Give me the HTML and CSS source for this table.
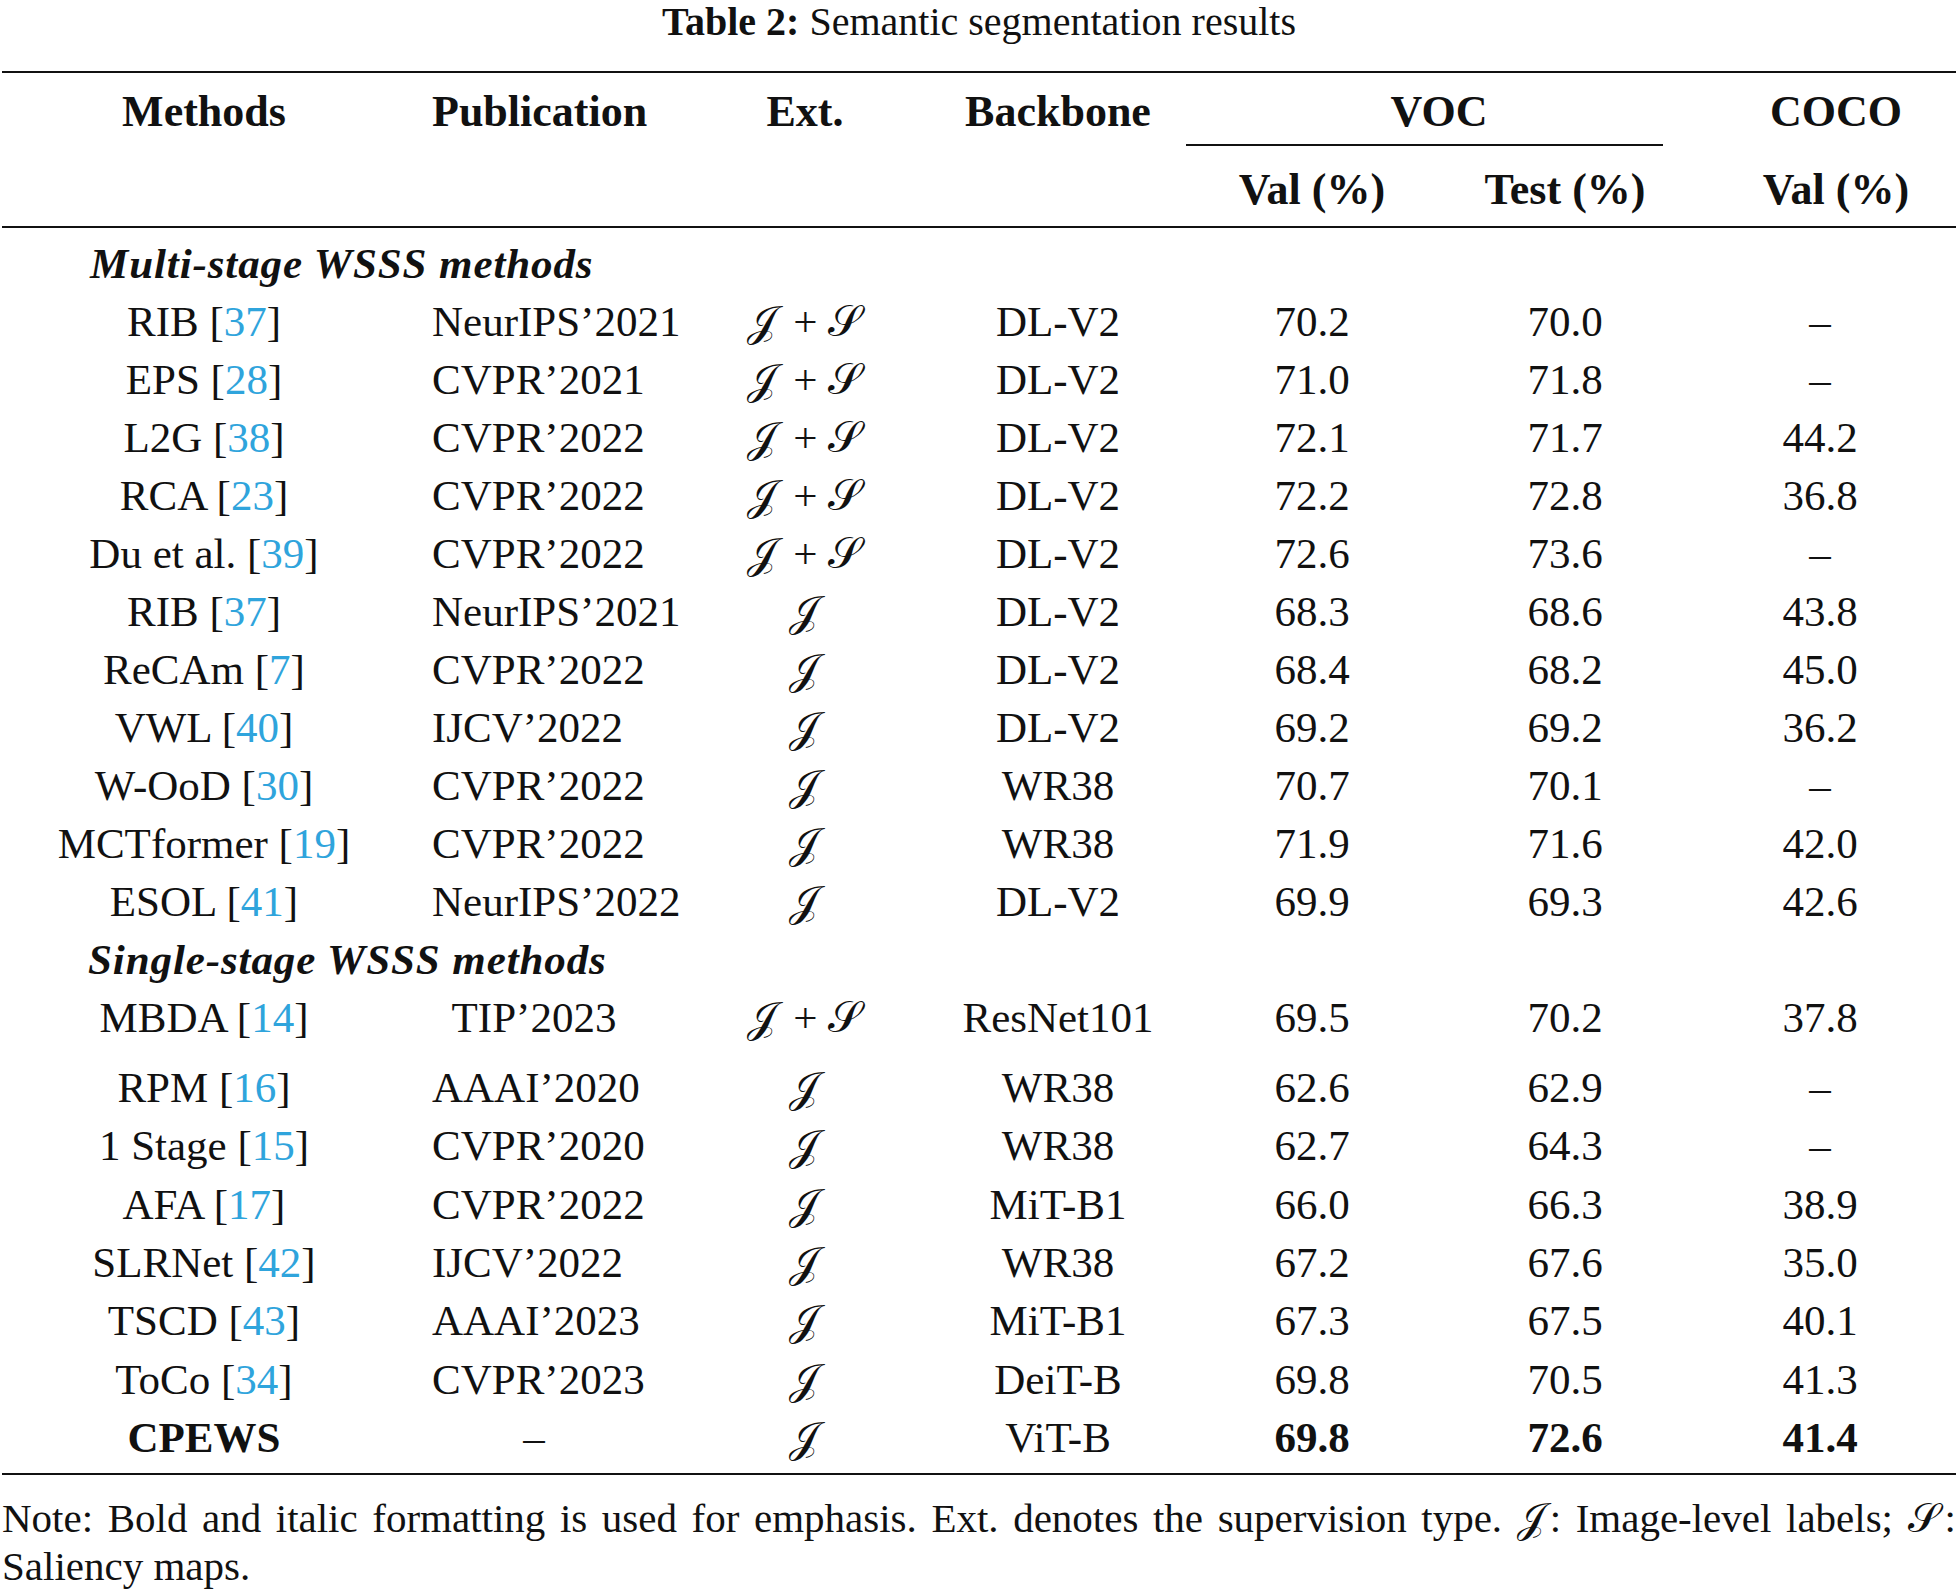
FILE: index.html
```html
<!DOCTYPE html>
<html lang="en">
<head>
<meta charset="utf-8">
<title>Table 2: Semantic segmentation results</title>
<link rel="stylesheet" href="styles.css">
</head>
<body>
<div class="page">
  <div class="title"><b>Table 2:</b> Semantic segmentation results</div>
  <table class="results">
    <colgroup>
      <col class="c-method"><col class="c-pub"><col class="c-ext"><col class="c-bb"><col class="c-val"><col class="c-test"><col class="c-coco">
    </colgroup>
    <thead>
      <tr class="h1">
        <th>Methods</th>
        <th class="pub">Publication</th>
        <th>Ext.</th>
        <th>Backbone</th>
        <th colspan="2" class="voc"><div>VOC</div><div class="cmid"></div></th>
        <th class="coco">COCO</th>
      </tr>
      <tr class="h2">
        <th></th><th></th><th></th><th></th>
        <th>Val (%)</th>
        <th>Test (%)</th>
        <th class="coco">Val (%)</th>
      </tr>
    </thead>
    <tbody>
      <tr class="sec first"><td colspan="7">Multi-stage WSSS methods</td></tr>
      <tr><td>RIB [<span class="ref">37</span>]</td><td class="pub">NeurIPS’2021</td><td class="ext"><span class="scr">𝒥</span> + <span class="scr">𝒮</span></td><td>DL-V2</td><td>70.2</td><td>70.0</td><td class="coco">–</td></tr>
      <tr><td>EPS [<span class="ref">28</span>]</td><td class="pub">CVPR’2021</td><td class="ext"><span class="scr">𝒥</span> + <span class="scr">𝒮</span></td><td>DL-V2</td><td>71.0</td><td>71.8</td><td class="coco">–</td></tr>
      <tr><td>L2G [<span class="ref">38</span>]</td><td class="pub">CVPR’2022</td><td class="ext"><span class="scr">𝒥</span> + <span class="scr">𝒮</span></td><td>DL-V2</td><td>72.1</td><td>71.7</td><td class="coco">44.2</td></tr>
      <tr><td>RCA [<span class="ref">23</span>]</td><td class="pub">CVPR’2022</td><td class="ext"><span class="scr">𝒥</span> + <span class="scr">𝒮</span></td><td>DL-V2</td><td>72.2</td><td>72.8</td><td class="coco">36.8</td></tr>
      <tr><td>Du et al. [<span class="ref">39</span>]</td><td class="pub">CVPR’2022</td><td class="ext"><span class="scr">𝒥</span> + <span class="scr">𝒮</span></td><td>DL-V2</td><td>72.6</td><td>73.6</td><td class="coco">–</td></tr>
      <tr><td>RIB [<span class="ref">37</span>]</td><td class="pub">NeurIPS’2021</td><td class="ext"><span class="scr">𝒥</span></td><td>DL-V2</td><td>68.3</td><td>68.6</td><td class="coco">43.8</td></tr>
      <tr><td>ReCAm [<span class="ref">7</span>]</td><td class="pub">CVPR’2022</td><td class="ext"><span class="scr">𝒥</span></td><td>DL-V2</td><td>68.4</td><td>68.2</td><td class="coco">45.0</td></tr>
      <tr><td>VWL [<span class="ref">40</span>]</td><td class="pub">IJCV’2022</td><td class="ext"><span class="scr">𝒥</span></td><td>DL-V2</td><td>69.2</td><td>69.2</td><td class="coco">36.2</td></tr>
      <tr><td>W-OoD [<span class="ref">30</span>]</td><td class="pub">CVPR’2022</td><td class="ext"><span class="scr">𝒥</span></td><td>WR38</td><td>70.7</td><td>70.1</td><td class="coco">–</td></tr>
      <tr><td>MCTformer [<span class="ref">19</span>]</td><td class="pub">CVPR’2022</td><td class="ext"><span class="scr">𝒥</span></td><td>WR38</td><td>71.9</td><td>71.6</td><td class="coco">42.0</td></tr>
      <tr><td>ESOL [<span class="ref">41</span>]</td><td class="pub">NeurIPS’2022</td><td class="ext"><span class="scr">𝒥</span></td><td>DL-V2</td><td>69.9</td><td>69.3</td><td class="coco">42.6</td></tr>
      <tr class="sec second"><td colspan="7">Single-stage WSSS methods</td></tr>
      <tr class="tall"><td>MBDA [<span class="ref">14</span>]</td><td class="pub mid">TIP’2023</td><td class="ext"><span class="scr">𝒥</span> + <span class="scr">𝒮</span></td><td>ResNet101</td><td>69.5</td><td>70.2</td><td class="coco">37.8</td></tr>
      <tr class="s2"><td>RPM [<span class="ref">16</span>]</td><td class="pub">AAAI’2020</td><td class="ext"><span class="scr">𝒥</span></td><td>WR38</td><td>62.6</td><td>62.9</td><td class="coco">–</td></tr>
      <tr class="s2"><td>1 Stage [<span class="ref">15</span>]</td><td class="pub">CVPR’2020</td><td class="ext"><span class="scr">𝒥</span></td><td>WR38</td><td>62.7</td><td>64.3</td><td class="coco">–</td></tr>
      <tr class="s2"><td>AFA [<span class="ref">17</span>]</td><td class="pub">CVPR’2022</td><td class="ext"><span class="scr">𝒥</span></td><td>MiT-B1</td><td>66.0</td><td>66.3</td><td class="coco">38.9</td></tr>
      <tr class="s2"><td>SLRNet [<span class="ref">42</span>]</td><td class="pub">IJCV’2022</td><td class="ext"><span class="scr">𝒥</span></td><td>WR38</td><td>67.2</td><td>67.6</td><td class="coco">35.0</td></tr>
      <tr class="s2"><td>TSCD [<span class="ref">43</span>]</td><td class="pub">AAAI’2023</td><td class="ext"><span class="scr">𝒥</span></td><td>MiT-B1</td><td>67.3</td><td>67.5</td><td class="coco">40.1</td></tr>
      <tr class="s2"><td>ToCo [<span class="ref">34</span>]</td><td class="pub">CVPR’2023</td><td class="ext"><span class="scr">𝒥</span></td><td>DeiT-B</td><td>69.8</td><td>70.5</td><td class="coco">41.3</td></tr>
      <tr class="s2 last"><td><b>CPEWS</b></td><td class="pub mid">–</td><td class="ext"><span class="scr">𝒥</span></td><td>ViT-B</td><td><b>69.8</b></td><td><b>72.6</b></td><td class="coco"><b>41.4</b></td></tr>
    </tbody>
  </table>
  <p class="note">Note: Bold and italic formatting is used for emphasis. Ext. denotes the supervision type. <span class="scr">𝒥</span>: Image-level labels; <span class="scr">𝒮</span>: Saliency maps.</p>
</div>
</body>
</html>
```
FILE: styles.css
```css
html, body {
  margin: 0;
  padding: 0;
  background: #ffffff;
}

body {
  font-family: "Liberation Serif", "Times New Roman", "DejaVu Serif", serif;
  color: #111111;
}

.page {
  width: 1958px;
}

.title {
  font-size: 40px;
  line-height: 44px;
  text-align: center;
  margin-bottom: 27px;
}

.results {
  margin-left: 2px;
  width: 1954px;
  table-layout: fixed;
  border-collapse: separate;
  border-spacing: 0;
  border-top: 2px solid #111111;
  font-size: 43px;
}

.c-method { width: 404px; }
.c-pub { width: 274px; }
.c-ext { width: 250px; }
.c-bb { width: 256px; }
.c-val { width: 252px; }
.c-test { width: 254px; }
.c-coco { width: 264px; }

.results th,
.results td {
  padding: 0;
  line-height: 58px;
  text-align: center;
  vertical-align: top;
  white-space: nowrap;
  font-weight: normal;
}

.results th {
  font-weight: bold;
  font-size: 44px;
}

.results .pub {
  text-align: left;
  padding-left: 26px;
}

.results .pub.mid {
  text-align: center;
  padding-left: 0;
  padding-right: 18px;
}

.results td.coco {
  padding-right: 8px;
}

.results th.coco {
  padding-left: 24px;
}

.h1 th {
  padding-top: 10px;
}

.voc .cmid {
  height: 2px;
  margin-top: 3px;
  margin-right: 29px;
  background: #111111;
}

.h2 th {
  padding-top: 15px;
  padding-bottom: 7px;
  border-bottom: 2px solid #111111;
}

.sec td {
  text-align: left;
  font-weight: bold;
  font-style: italic;
  letter-spacing: 0.9px;
}

.sec.first td {
  padding-top: 7px;
  padding-left: 88px;
}

.sec.second td {
  padding-left: 86px;
}

.tall td {
  padding-bottom: 12px;
}

.s2 td {
  line-height: 58.33px;
}

.last td {
  padding-bottom: 6px;
  border-bottom: 2px solid #111111;
}

.ref {
  color: #2fa4dc;
}

.scr {
  font-style: normal;
  display: inline-block;
  padding-right: 6px;
}

.results .ext {
  padding-left: 4px;
}

.note .scr {
  display: inline;
  padding-right: 5px;
}

.note {
  margin: 19px 0 0 0;
  padding: 0 2px;
  font-size: 41px;
  line-height: 48px;
  text-align: justify;
}
```
